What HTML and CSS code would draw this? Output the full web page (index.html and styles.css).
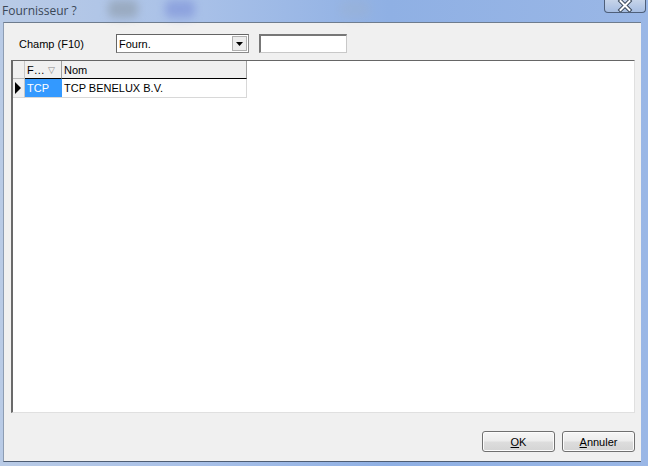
FILE: index.html
```html
<!DOCTYPE html>
<html>
<head>
<meta charset="utf-8">
<link rel="stylesheet" href="styles.css">
</head>
<body>
<div class="window">
  <div class="titlebar">
    <span class="title">Fournisseur ?</span>
    <div class="blur b1"></div><div class="blur b2"></div><div class="blur b3"></div>
    <div class="close"><svg width="40" height="13" viewBox="0 0 40 13"><path d="M15.5 2 L24.5 11 M24.5 2 L15.5 11" stroke="#3c4a5c" stroke-width="4" stroke-linecap="square"/><path d="M15.5 2 L24.5 11 M24.5 2 L15.5 11" stroke="#fff" stroke-width="2" stroke-linecap="square"/></svg></div>
  </div>
  <div class="client">
    <div class="filter">
      <span class="label">Champ (F10)</span>
      <div class="combo"><span class="combo-text">Fourn.</span><span class="combo-btn"><svg width="7" height="4" viewBox="0 0 7 4"><path d="M0 0H7L3.5 4Z" fill="#000"/></svg></span></div>
      <div class="textbox"></div>
    </div>
    <div class="grid">
      <div class="row head">
        <div class="cell ind"></div>
        <div class="cell c1">F… <span class="sort">▽</span></div>
        <div class="cell c2">Nom</div>
      </div>
      <div class="row data">
        <div class="cell ind"><svg width="6" height="12" viewBox="0 0 6 12"><path d="M0 0L6 6L0 12Z" fill="#000"/></svg></div>
        <div class="cell c1 sel">TCP</div>
        <div class="cell c2">TCP BENELUX B.V.</div>
      </div>
    </div>
    <div class="buttons">
      <button class="btn"><u>O</u>K</button>
      <button class="btn"><u>A</u>nnuler</button>
    </div>
  </div>
</div>
</body>
</html>
```
FILE: styles.css
```css
html, body { margin: 0; padding: 0; }
body { width: 648px; height: 466px; overflow: hidden; font-family: "Liberation Sans", Arial, sans-serif; font-size: 11px; }
.window {
  width: 648px; height: 466px; box-sizing: border-box;
  background: linear-gradient(90deg, #b9cbe6 0%, #a9c1e8 30%, #8fb0e4 60%, #9ab7e6 100%);
  display: flex; flex-direction: column;
}
.titlebar { height: 22px; position: relative; flex: none; }
.title { position: absolute; left: 2px; top: 2px; font-family: "Open Sans", "DejaVu Sans", sans-serif; font-size: 12px; color: #3a4757; z-index: 2; }
.blur { position: absolute; top: 0; height: 18px; border-radius: 6px; filter: blur(4px); opacity: .6; }
.b1 { left: 108px; width: 30px; background: #8c9aa8; }
.b2 { left: 165px; width: 30px; background: #7b8fd8; }
.b3 { left: 340px; width: 30px; background: #9eb0c8; opacity: .3; }
.close { position: absolute; left: 604px; top: -1px; width: 40px; height: 13px; border: 1px solid #4e5f7a; border-top: none; border-radius: 0 0 4px 4px; background: linear-gradient(#c9d6ea, #a6bde2); box-sizing: content-box; }
.close svg { display: block; }
.client {
  flex: 1; margin: 0 7px 4px 3px; background: #f0f0f0;
  border-top: 1px solid #6e7c8e; border-left: 1px solid #8d9db3;
  border-bottom: 1px solid #4e5d73;
  display: flex; flex-direction: column;
  padding: 11px 6px 9px 7px;
}
.filter { display: flex; align-items: center; height: 19px; }
.label { width: 97px; padding-left: 8px; color: #000; }
.combo { width: 133px; height: 19px; box-sizing: border-box; background: #fff; border: 1px solid #8a8a8a; border-top-color: #646464; border-left-color: #646464; display: flex; align-items: center; }
.combo-text { flex: 1; padding-left: 2px; }
.combo-btn { width: 15px; height: 15px; margin-right: 1px; background: #ececec; border: 1px solid #b0b0b0; box-sizing: border-box; display: flex; align-items: center; justify-content: center; }
.combo-btn svg { display: block; }
.textbox { margin-left: 10px; width: 88px; height: 19px; box-sizing: border-box; background: #fff; border: 1px solid #c8c8c8; border-top: 2px solid #777; border-left: 2px solid #777; }
.grid { margin-top: 7px; flex: 1; background: #fff; border-top: 1px solid #666; border-left: 2px solid #6a6a6a; border-right: 1px solid #e0e0e0; border-bottom: 1px solid #e0e0e0; }
.row { display: flex; }
.cell { box-sizing: border-box; display: flex; align-items: center; white-space: nowrap; }
.head { height: 18px; }
.head .cell { background: #f0f0f0; border-bottom: 1px solid #000; border-right: 1px solid #a0a0a0; padding-left: 2px; }
.head .ind { border-bottom: 1px solid #b8b8b8; border-right: 1px solid #c8c8c8; }
.sort { color: #888; font-size: 9px; margin-left: 3px; }
.ind { width: 12px; }
.c1 { width: 37px; }
.c2 { width: 185px; }
.data { height: 19px; }
.data .cell { border-bottom: 1px solid #d8d8d8; padding-left: 2px; }
.data .ind { background: #f0f0f0; padding-left: 2px; border-right: 1px solid #c8c8c8; }
.data .ind svg { display: block; }
.data .c2 { border-right: 1px solid #d8d8d8; }
.sel { background: #3399ff; color: #fff; }
.buttons { margin-top: 18px; display: flex; justify-content: flex-end; gap: 7px; height: 21px; }
.btn { width: 73px; height: 21px; padding: 0; border: 1px solid #707070; border-radius: 3px; background: linear-gradient(#f6f6f6 0%, #ececec 48%, #dddddd 52%, #d4d4d4 100%); font-family: "Liberation Sans", Arial, sans-serif; font-size: 11px; color: #000; box-shadow: inset 0 0 0 1px #fcfcfc; }
```
